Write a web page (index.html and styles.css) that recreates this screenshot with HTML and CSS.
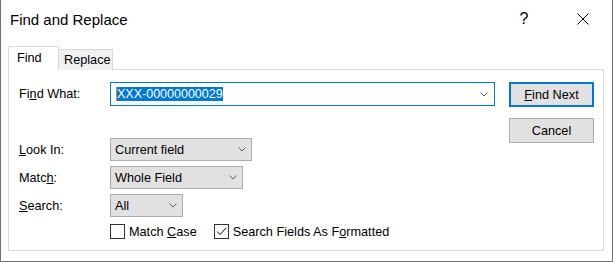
FILE: index.html
```html
<!DOCTYPE html>
<html lang="en">
<head>
    <meta charset="UTF-8">
    <title>Find and Replace</title>
    <link rel="stylesheet" href="styles.css">
</head>
<body>
    <div class="window">
        <div class="titlebar">
            <div class="title">Find and Replace</div>
            <div class="help">?</div>
            <div class="close">
                <svg width="12" height="12" viewBox="0 0 12 12"><path d="M0.5 0.5 L11.5 11.5 M11.5 0.5 L0.5 11.5" stroke="#000" stroke-width="1" fill="none"/></svg>
            </div>
        </div>
        <div class="content">
            <div class="tabs">
                <div class="tab active">Find</div>
                <div class="tab">Replace</div>
            </div>
            <div class="panel">
                <div class="form">
                    <div class="row find-row">
                        <div class="label">Fi<u>n</u>d What:</div>
                        <div class="combo">
                            <span class="selected">XXX-00000000029</span>
                            <svg class="chevron" width="8" height="5" viewBox="0 0 8 5"><path d="M0.5 0.5 L4 4 L7.5 0.5" stroke="#606060" fill="none"/></svg>
                        </div>
                    </div>
                    <div class="row">
                        <div class="label"><u>L</u>ook In:</div>
                        <div class="select look-in"><span>Current field</span>
                            <svg class="chevron" width="8" height="5" viewBox="0 0 8 5"><path d="M0.5 0.5 L4 4 L7.5 0.5" stroke="#606060" fill="none"/></svg>
                        </div>
                    </div>
                    <div class="row">
                        <div class="label">Matc<u>h</u>:</div>
                        <div class="select match"><span>Whole Field</span>
                            <svg class="chevron" width="8" height="5" viewBox="0 0 8 5"><path d="M0.5 0.5 L4 4 L7.5 0.5" stroke="#606060" fill="none"/></svg>
                        </div>
                    </div>
                    <div class="row">
                        <div class="label"><u>S</u>earch:</div>
                        <div class="select search"><span>All</span>
                            <svg class="chevron" width="8" height="5" viewBox="0 0 8 5"><path d="M0.5 0.5 L4 4 L7.5 0.5" stroke="#606060" fill="none"/></svg>
                        </div>
                    </div>
                    <div class="checks">
                        <div class="check"><span class="box"></span><span>Match <u>C</u>ase</span></div>
                        <div class="check">
                            <span class="box">
                                <svg width="13" height="13" viewBox="0 0 13 13"><path d="M2 6.5 L5 9.5 L11 3" stroke="#000" fill="none"/></svg>
                            </span><span>Search Fields As F<u>o</u>rmatted</span>
                        </div>
                    </div>
                </div>
                <div class="buttons">
                    <div class="btn default"><span><u>F</u>ind Next</span></div>
                    <div class="btn">Cancel</div>
                </div>
            </div>
        </div>
    </div>
</body>
</html>
```

FILE: styles.css
```css
body {
    margin: 0;
    background: #ffffff;
    font-family: "Liberation Sans", Arial, sans-serif;
    font-size: 12.7px;
    color: #000000;
}
.window {
    width: 613px;
    height: 262px;
    box-sizing: border-box;
    border: 1px solid #6f6f6f;
    border-top: none;
    background: #ffffff;
}
.titlebar {
    height: 38px;
    display: flex;
    align-items: center;
    padding-left: 9px;
}
.title {
    flex: 1;
    font-size: 15px;
}
.help {
    width: 30px;
    text-align: center;
    font-size: 16px;
    margin-right: 29px;
}
.close {
    width: 30px;
    height: 12px;
    display: flex;
    justify-content: center;
    margin-right: 14px;
}
.content {
    padding: 8px 8px 0 7px;
}
.tabs {
    display: flex;
    align-items: flex-end;
    height: 24px;
    margin-bottom: -1px;
}
.tab {
    box-sizing: border-box;
    border: 1px solid #d9d9d9;
    border-bottom: none;
    line-height: 16px;
}
.tab.active {
    position: relative;
    z-index: 1;
    width: 51px;
    height: 24px;
    padding: 3px 0 0 8px;
    background: #ffffff;
}
.tab:not(.active) {
    width: 54px;
    height: 21px;
    padding: 2px 0 0 5px;
    border-left: none;
    background: #f0f0f0;
}
.panel {
    display: flex;
    border: 1px solid #d9d9d9;
    background: #ffffff;
    padding: 12px 9px 11px 10px;
}
.form {
    display: flex;
    flex-direction: column;
    gap: 5px;
}
.row {
    display: flex;
    align-items: center;
    height: 23px;
}
.find-row {
    height: 24px;
    margin-bottom: 27px;
}
.label {
    width: 91px;
}
.combo {
    width: 385px;
    height: 24px;
    box-sizing: border-box;
    border: 1px solid #0078d7;
    display: flex;
    align-items: center;
    justify-content: space-between;
    padding: 0 6px 0 5px;
}
.selected {
    background: #0078d7;
    color: #ffffff;
    font-size: 12.5px;
    line-height: 14px;
    border-left: 1px solid #d9822b;
}
.select {
    height: 23px;
    box-sizing: border-box;
    border: 1px solid #adadad;
    background: #e1e1e1;
    display: flex;
    align-items: center;
    justify-content: space-between;
    padding: 0 5px 0 4px;
}
.look-in {
    width: 142px;
}
.match {
    width: 133px;
}
.search {
    width: 73px;
}
.checks {
    display: flex;
    gap: 17px;
    margin-top: 2px;
    padding-left: 91px;
}
.check {
    display: flex;
    align-items: center;
    height: 15px;
}
.box {
    width: 15px;
    height: 15px;
    box-sizing: border-box;
    border: 1px solid #333333;
    background: #ffffff;
    margin-right: 4px;
    display: flex;
}
.buttons {
    display: flex;
    flex-direction: column;
    gap: 11px;
    margin-left: 14px;
}
.btn {
    width: 85px;
    height: 25px;
    box-sizing: border-box;
    border: 1px solid #adadad;
    background: #e1e1e1;
    display: flex;
    align-items: center;
    justify-content: center;
}
.btn.default {
    border: 2px solid #0078d7;
}
```
